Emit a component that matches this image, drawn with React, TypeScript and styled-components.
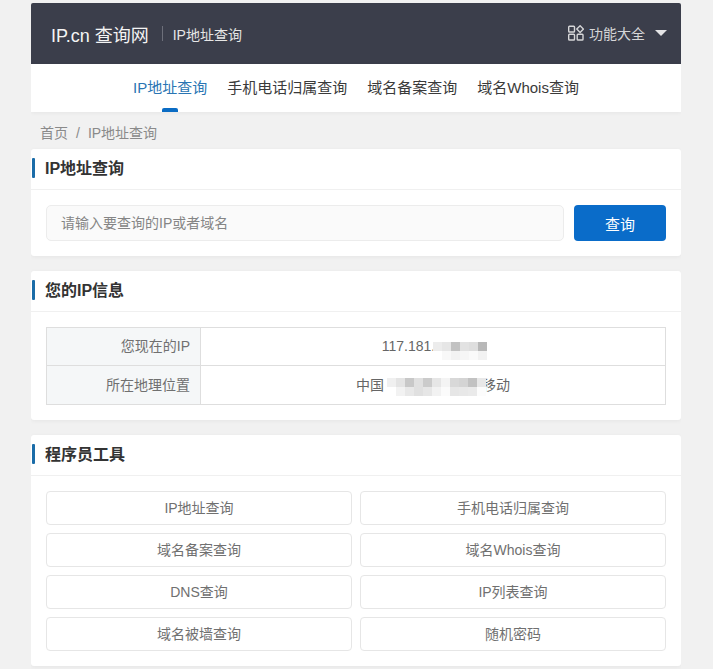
import React from 'react';
import styled, { createGlobalStyle } from 'styled-components';

const GlobalStyle = createGlobalStyle`
  html, body {
    margin: 0;
    padding: 0;
    background: #f1f1f1;
    font-family: "Liberation Sans", "Noto Sans CJK SC", sans-serif;
  }
  * { box-sizing: border-box; }
`;

const Page = styled.div`
  width: 650px;
  margin-left: 31px;
  padding-top: 3px;
  height: 669px;
  overflow: hidden;
`;

const Header = styled.div`
  height: 61px;
  background: #3b3e4b;
  border-radius: 2px 2px 0 0;
  display: flex;
  align-items: center;
  padding: 0 14px 0 20px;
  color: #fff;
`;

const Logo = styled.div`
  font-size: 18px;
  color: #f4f4f4;
`;

const HeaderDivider = styled.div`
  width: 1px;
  height: 15px;
  background: #6d6f7a;
  margin: 0 10px 0 13px;
`;

const HeaderTitle = styled.div`
  font-size: 14px;
  color: #e6e6e6;
  flex: 1;
`;

const AllTools = styled.div`
  display: flex;
  align-items: center;
  font-size: 14px;
  color: #d6d6d8;
  margin-top: -2px;
`;

const ToolsLabel = styled.span`
  margin: 0 10px 0 5px;
`;

const Caret = styled.span`
  width: 0;
  height: 0;
  border-left: 6px solid transparent;
  border-right: 6px solid transparent;
  border-top: 6px solid #e4e4e6;
`;

const Nav = styled.nav`
  height: 48px;
  background: #fff;
  display: flex;
  justify-content: center;
  gap: 20px;
  box-shadow: 0 1px 4px rgba(0, 0, 0, 0.05);
`;

const NavItem = styled.div<{ $active?: boolean }>`
  position: relative;
  font-size: 15px;
  line-height: 47px;
  color: ${(p) => (p.$active ? '#2a75b3' : '#3a3a3a')};

  &::after {
    content: '';
    display: ${(p) => (p.$active ? 'block' : 'none')};
    position: absolute;
    left: 50%;
    bottom: 0;
    width: 16px;
    height: 4px;
    margin-left: -8px;
    border-radius: 2px 2px 0 0;
    background: #0a6cc4;
  }
`;

const Breadcrumb = styled.div`
  height: 37px;
  padding: 13px 0 0 9px;
  font-size: 14px;
  line-height: 16px;
  color: #8a8a8a;
`;

const Slash = styled.span`
  margin: 0 8px;
`;

const Card = styled.section`
  background: #fff;
  border-radius: 3px;
  box-shadow: 0 1px 4px rgba(0, 0, 0, 0.05);
  margin-bottom: 15px;
`;

const CardTitle = styled.h2`
  position: relative;
  margin: 0;
  height: 41px;
  padding-left: 14px;
  border-bottom: 1px solid #f0f0f0;
  font-size: 16px;
  font-weight: bold;
  line-height: 39px;
  color: #333;

  &::before {
    content: '';
    position: absolute;
    left: 1px;
    top: 9px;
    width: 3px;
    height: 20px;
    border-radius: 1px;
    background: #1a6ca8;
  }
`;

const SearchBody = styled.div`
  display: flex;
  gap: 10px;
  padding: 15px;
`;

const SearchInput = styled.div`
  flex: 1;
  height: 36px;
  padding-left: 14px;
  background: #fafafa;
  border: 1px solid #ececec;
  border-radius: 5px;
  font-size: 14px;
  line-height: 34px;
  color: #858585;
`;

const SearchButton = styled.button`
  width: 92px;
  height: 36px;
  border: none;
  border-radius: 4px;
  background: #0a6cc9;
  color: #fff;
  font-family: inherit;
  font-size: 15px;
`;

const TableWrap = styled.div`
  padding: 15px;
`;

const InfoTable = styled.div`
  border: 1px solid #dedede;
`;

const InfoRow = styled.div`
  display: grid;
  grid-template-columns: 154px 1fr;
  height: 37px;
  line-height: 37px;

  & + & {
    border-top: 1px solid #dedede;
    height: 39px;
    line-height: 38px;
  }
`;

const InfoLabel = styled.div`
  background: #f5f7f8;
  border-right: 1px solid #dedede;
  padding-right: 10px;
  text-align: right;
  font-size: 14px;
  color: #707070;
`;

const InfoValue = styled.div`
  display: flex;
  align-items: flex-start;
  justify-content: center;
  font-size: 14px;
  color: #666;
`;

const Mosaic = styled.span<{ $top: number; $left: number; $right: number }>`
  display: inline-flex;
  flex-direction: column;
  margin: ${(p) => p.$top}px ${(p) => -p.$right}px 0 ${(p) => p.$left}px;
  position: relative;
  filter: blur(0.7px);
`;

const MosaicRow = styled.span`
  display: flex;
  height: 9px;
`;

const MosaicCell = styled.span<{ $shade: string }>`
  width: 9px;
  background: ${(p) => p.$shade};
`;

const ipMosaic = [
  ['#ececec', '#e6e6e6', '#c2c2c2', '#e2e2e2', '#dedede', '#b8b8b8'],
  ['#ffffff', '#f8f8f8', '#f2f2f2', '#f6f6f6', '#fafafa', '#f2f2f2'],
];

const regionMosaic = [
  ['#f0f0f0', '#e4e4e4', '#c8c8c8', '#e0e0e0', '#cbcbcb', '#e6e6e6', '#f4f4f4', '#d8d8d8', '#d4d4d4', '#c2c2c2', '#e8e8e8'],
  ['#ffffff', '#f2f2f2', '#e8e8e8', '#e0e0e0', '#e6e6e6', '#f2f2f2', '#fbfbfb', '#e6e6e6', '#e8e8e8', '#eaeaea', '#fcfcfc'],
];

const ToolGrid = styled.div`
  display: grid;
  grid-template-columns: 1fr 1fr;
  gap: 8px;
  padding: 15px;
`;

const ToolLink = styled.a`
  height: 34px;
  background: #fff;
  border: 1px solid #e6e6e6;
  border-radius: 4px;
  text-align: center;
  font-size: 14px;
  line-height: 32px;
  color: #707070;
`;

const tools = [
  'IP地址查询', '手机电话归属查询', '域名备案查询', '域名Whois查询',
  'DNS查询', 'IP列表查询', '域名被墙查询', '随机密码',
];

const GridIcon = () => (
  <svg width="16" height="16" viewBox="0 0 16 16" fill="none" stroke="#d6d6d8" strokeWidth="1.4">
    <rect x="0.7" y="1.2" width="5.8" height="5.8" rx="0.8" />
    <rect x="0.7" y="9.2" width="5.8" height="5.8" rx="0.8" />
    <rect x="9.2" y="9.2" width="5.8" height="5.8" rx="0.8" />
    <path d="M12.1 0.8 L15.4 4.1 L12.1 7.4 L8.8 4.1 Z" />
  </svg>
);

const MosaicPatch = ({ rows, top, left, right }: { rows: string[][]; top: number; left: number; right: number }) => (
  <Mosaic $top={top} $left={left} $right={right}>
    {rows.map((row, r) => (
      <MosaicRow key={r}>
        {row.map((shade, c) => <MosaicCell key={c} $shade={shade} />)}
      </MosaicRow>
    ))}
  </Mosaic>
);

const App = () => (
  <Page>
    <GlobalStyle />
    <Header>
      <Logo>IP.cn 查询网</Logo>
      <HeaderDivider />
      <HeaderTitle>IP地址查询</HeaderTitle>
      <AllTools>
        <GridIcon />
        <ToolsLabel>功能大全</ToolsLabel>
        <Caret />
      </AllTools>
    </Header>
    <Nav>
      <NavItem $active>IP地址查询</NavItem>
      <NavItem>手机电话归属查询</NavItem>
      <NavItem>域名备案查询</NavItem>
      <NavItem>域名Whois查询</NavItem>
    </Nav>
    <Breadcrumb>
      首页<Slash>/</Slash>IP地址查询
    </Breadcrumb>
    <Card>
      <CardTitle>IP地址查询</CardTitle>
      <SearchBody>
        <SearchInput>请输入要查询的IP或者域名</SearchInput>
        <SearchButton>查询</SearchButton>
      </SearchBody>
    </Card>
    <Card>
      <CardTitle>您的IP信息</CardTitle>
      <TableWrap>
        <InfoTable>
          <InfoRow>
            <InfoLabel>您现在的IP</InfoLabel>
            <InfoValue>
              117.181.
              <MosaicPatch rows={ipMosaic} top={14} left={-2} right={3} />
            </InfoValue>
          </InfoRow>
          <InfoRow>
            <InfoLabel>所在地理位置</InfoLabel>
            <InfoValue>
              中国
              <MosaicPatch rows={regionMosaic} top={12} left={3} right={4} />
              <span>移动</span>
            </InfoValue>
          </InfoRow>
        </InfoTable>
      </TableWrap>
    </Card>
    <Card>
      <CardTitle>程序员工具</CardTitle>
      <ToolGrid>
        {tools.map((t) => <ToolLink key={t}>{t}</ToolLink>)}
      </ToolGrid>
    </Card>
  </Page>
);

export default App;
